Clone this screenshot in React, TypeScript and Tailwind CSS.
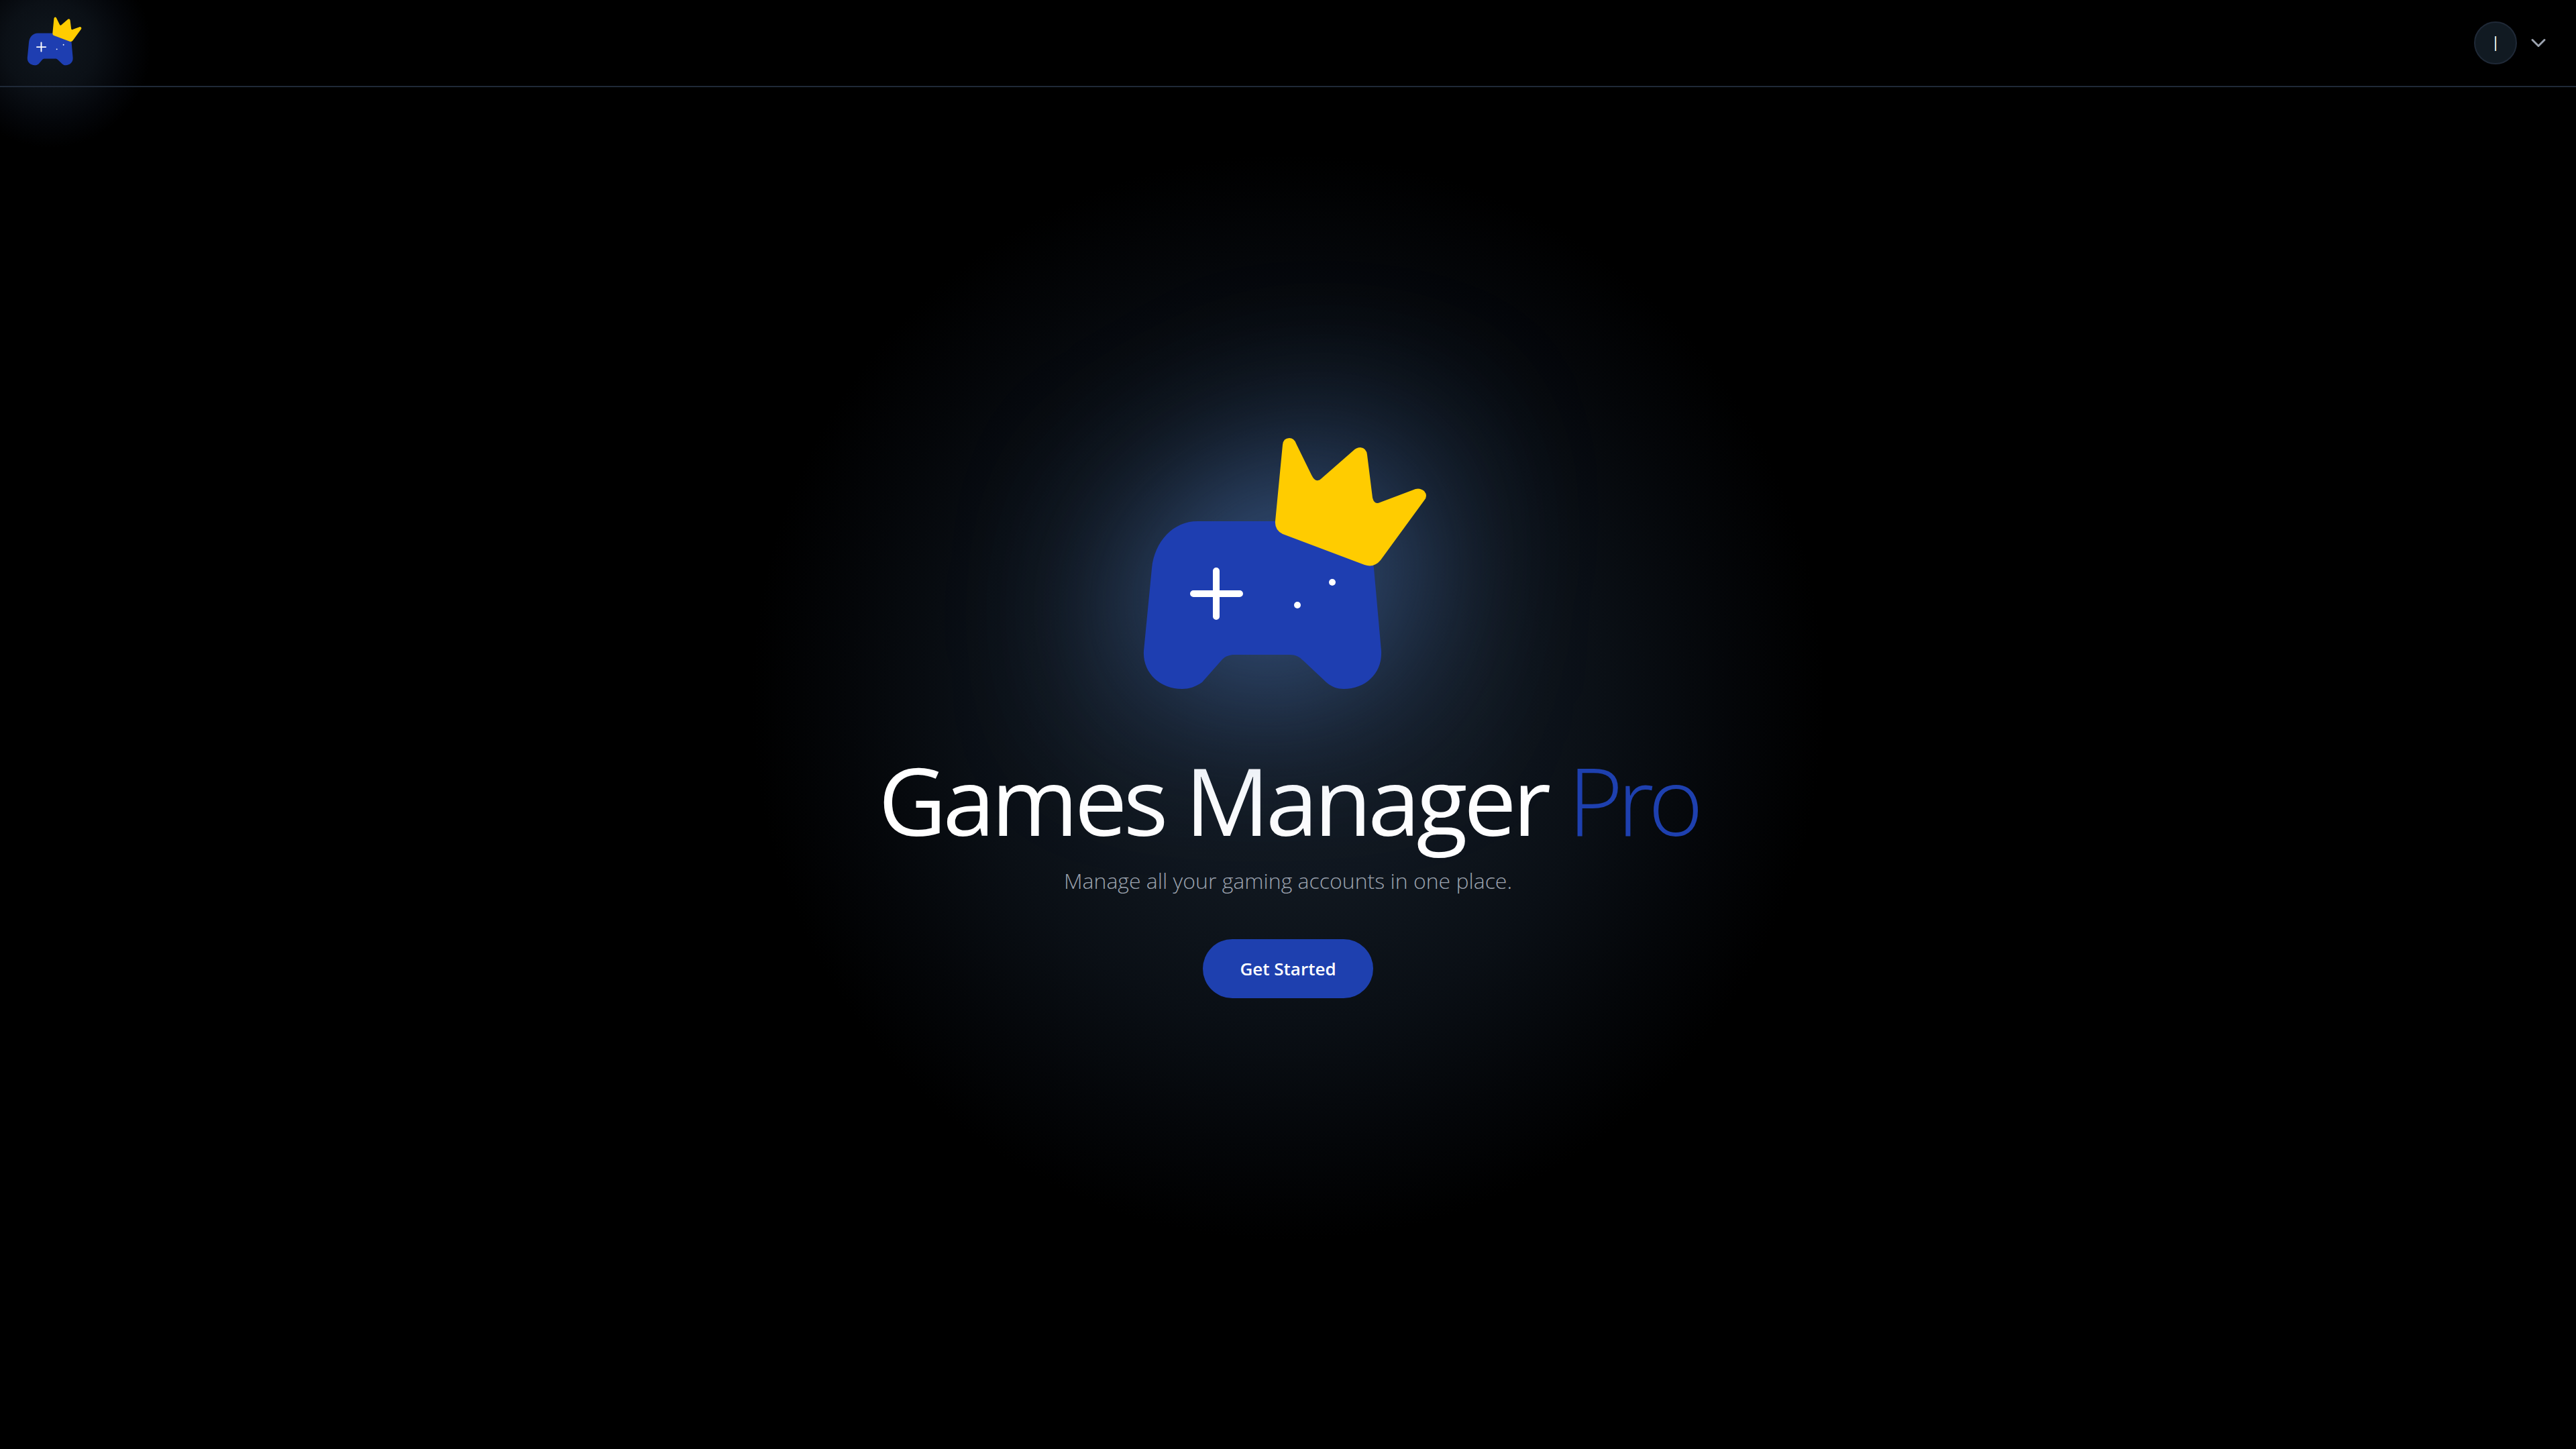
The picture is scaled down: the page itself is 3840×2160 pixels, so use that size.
import { ChevronDown } from "lucide-react";

function Logo({ className }: { className: string }) {
  return (
    <svg viewBox="40 0 480 430" className={className}>
      <path
        fill="#1e3eb1"
        d="M145 157 L339 157 C375 157 403 187 408 227 L419 350 C421 383 396 407 363 407 C354 407 345 404 337 397 L303 365 C297 359 291 356 283 356 L200 356 C193 356 187 358 182 363 L152 397 C142 404 132 407 122 407 C89 407 63 383 65 350 L77 227 C81 187 109 157 145 157 Z"
      />
      <path
        fill="#ffcc00"
        d="M272 43 Q273 33 282 33 Q289 33 292 41 L315 88 Q320 98 325 96 Q327 96 329 94 L377 52 Q382 47 388 47 Q397 48 398 58 L406 122 Q408 130 413 130 Q415 130 417 129 L470 109 Q477 107 483 112 Q489 119 483 126 L418 215 Q408 227 394 222 L272 176 Q260 170 261 157 Z"
      />
      <path d="M173 231 V299 M139 265 H208" stroke="#fff" strokeWidth="10" strokeLinecap="round" fill="none" />
      <circle cx="346" cy="248" r="5" fill="#fff" />
      <circle cx="294" cy="282" r="5" fill="#fff" />
    </svg>
  );
}

export default function App() {
  return (
    <div className="relative h-[2160px] w-full overflow-hidden bg-black font-['Open_Sans','Noto_Sans',sans-serif] text-white">
      <div className="absolute left-[1120px] top-[230px] h-[1620px] w-[1600px] bg-[radial-gradient(closest-side,#131b25_0%,#10171f_35%,#0a0f15_60%,#040609_82%,#000_100%)]" />
      <div className="absolute left-[-75px] top-[-80px] h-[300px] w-[300px] bg-[radial-gradient(closest-side,#10171e_0%,#0b1016_45%,#04060a_75%,#000_100%)]" />
      <header className="relative flex h-[130px] items-start justify-between border-b-2 border-[#1f2937] pl-[36px] pr-[47px]">
        <Logo className="mt-[19px] h-[83px] w-[92px]" />
        <div className="mt-[32px] flex items-center gap-[14px]">
          <div className="flex h-[64px] w-[64px] items-center justify-center rounded-full border-2 border-[#1f2937] bg-[#111a22] text-[32px] font-light">
            I
          </div>
          <ChevronDown size={36} strokeWidth={2} className="-mr-[9px] text-[#9ca3af]" />
        </div>
      </header>
      <main className="relative flex flex-col items-center pt-[490px]">
        <Logo className="h-[430px] w-[480px] drop-shadow-[0_0_130px_rgba(72,112,175,0.95)]" />
        <h1 className="mt-[62px] text-[140px] leading-[160px] tracking-[-0.04em]">
          Games Manager <span className="font-light tracking-[-0.06em] text-[#1e40af]">Pro</span>
        </h1>
        <p className="mt-[19px] text-[32px] leading-[44px] font-light text-[#9ca3af]">
          Manage all your gaming accounts in one place.
        </p>
        <button className="mt-[65px] h-[88px] w-[254px] rounded-full bg-[#1e40af] text-[26px] font-semibold text-white">
          Get Started
        </button>
      </main>
    </div>
  );
}
